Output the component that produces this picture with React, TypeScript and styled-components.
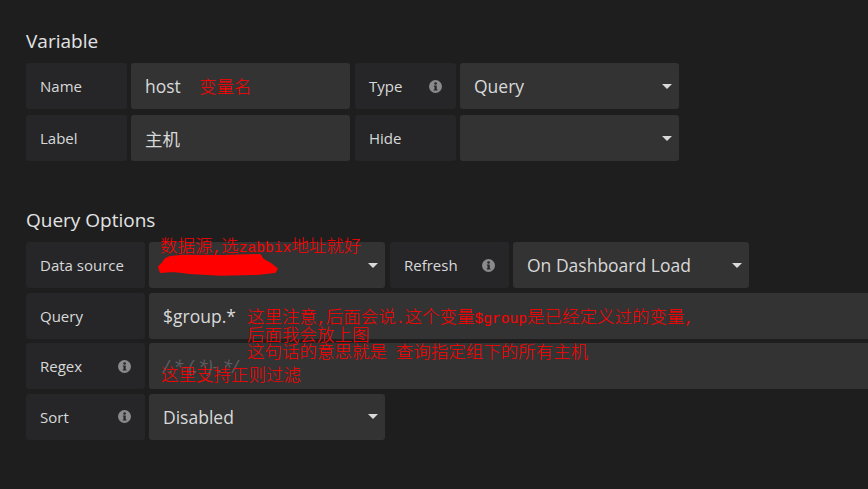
import React from "react";
import styled, { createGlobalStyle } from "styled-components";

const GlobalStyle = createGlobalStyle`
  html, body {
    margin: 0;
    padding: 0;
    background: #1f1e1f;
    overflow: hidden;
  }
  body {
    font-family: "Open Sans", "Noto Sans", sans-serif;
    color: #d8d9da;
  }
`;

const Page = styled.div`
  position: relative;
  width: 1100px;
  height: 489px;
  padding: 30px 0 0 26px;
  box-sizing: border-box;
`;

const Section = styled.section<{ $after: number }>`
  margin-bottom: ${(p) => p.$after}px;
`;

const Heading = styled.h3`
  margin: 0 0 11px 0;
  font-size: 19px;
  line-height: 22px;
  font-weight: 400;
  color: #e2e3e4;
`;

const Rows = styled.div<{ $gap: number }>`
  display: flex;
  flex-direction: column;
  gap: ${(p) => p.$gap}px;
`;

const Row = styled.div`
  display: flex;
  gap: 5px;
`;

const Group = styled.div`
  display: flex;
  gap: 4px;
`;

const Label = styled.div<{ $w: number }>`
  width: ${(p) => p.$w}px;
  height: 46px;
  box-sizing: border-box;
  padding: 0 14px;
  background: #262628;
  border-radius: 3px;
  display: flex;
  align-items: center;
  justify-content: space-between;
  font-size: 15px;
  color: #d8d9da;
`;

const Field = styled.div<{ $w: number }>`
  width: ${(p) => p.$w}px;
  height: 46px;
  box-sizing: border-box;
  padding: 0 7px 0 14px;
  background: #333333;
  border-radius: 3px;
  display: flex;
  align-items: center;
  font-size: 17.5px;
  color: #d8d9da;
  font-family: "Open Sans", "Noto Sans CJK SC", sans-serif;
  white-space: nowrap;
`;

const Placeholder = styled.span`
  color: #5e5e60;
  font-style: italic;
`;

const CaretBox = styled.span`
  margin-left: auto;
  display: flex;
  align-items: center;
`;

const Annot = styled.div<{ $top: number; $left: number }>`
  position: absolute;
  top: ${(p) => p.$top}px;
  left: ${(p) => p.$left}px;
  font-family: "Noto Sans CJK SC", sans-serif;
  font-weight: 300;
  font-size: 17.5px;
  color: #ff0000;
  white-space: nowrap;
`;

const AnnotLine = styled.div`
  height: 17.5px;
  line-height: 17.5px;
`;

const Mono = styled.span`
  font-family: "Liberation Mono", monospace;
  font-size: 14.6px;
  font-weight: 400;
  line-height: 0;
  white-space: pre;
`;

const Blob = styled.svg`
  position: absolute;
  top: 252px;
  left: 156px;
`;

const Caret = () => (
  <CaretBox>
    <svg width="10" height="5" viewBox="0 0 10 5">
      <polygon points="0,0 10,0 5,5" fill="#d8d9da" />
    </svg>
  </CaretBox>
);

const Info = () => (
  <svg width="13" height="13" viewBox="0 0 13 13">
    <circle cx="6.5" cy="6.5" r="6.5" fill="#8a8a8c" />
    <circle cx="6.6" cy="3.5" r="1.3" fill="#262628" />
    <path d="M4.9 5.4 H7.7 V9.6 H8.5 V10.6 H4.7 V9.6 H5.5 V6.4 H4.9 Z" fill="#262628" />
  </svg>
);

export default function App() {
  return (
    <>
      <GlobalStyle />
      <Page>
        <Section $after={48}>
          <Heading>Variable</Heading>
          <Rows $gap={6}>
            <Row>
              <Group>
                <Label $w={101}>Name</Label>
                <Field $w={219}>host</Field>
              </Group>
              <Group>
                <Label $w={101}>
                  Type <Info />
                </Label>
                <Field $w={219}>
                  Query
                  <Caret />
                </Field>
              </Group>
            </Row>
            <Row>
              <Group>
                <Label $w={101}>Label</Label>
                <Field $w={219}>主机</Field>
              </Group>
              <Group>
                <Label $w={101}>Hide</Label>
                <Field $w={219}>
                  <Caret />
                </Field>
              </Group>
            </Row>
          </Rows>
        </Section>

        <Section $after={45}>
          <Heading>Query Options</Heading>
          <Rows $gap={4.5}>
            <Row>
              <Group>
                <Label $w={119}>Data source</Label>
                <Field $w={236}>
                  <Caret />
                </Field>
              </Group>
              <Group>
                <Label $w={119}>
                  Refresh <Info />
                </Label>
                <Field $w={236}>
                  On Dashboard Load
                  <Caret />
                </Field>
              </Group>
            </Row>
            <Row>
              <Group>
                <Label $w={119}>Query</Label>
                <Field $w={780}>$group.*</Field>
              </Group>
            </Row>
            <Row>
              <Group>
                <Label $w={119}>
                  Regex <Info />
                </Label>
                <Field $w={780}>
                  <Placeholder>/.*-(.*)-.*/</Placeholder>
                </Field>
              </Group>
            </Row>
            <Row>
              <Group>
                <Label $w={119}>
                  Sort <Info />
                </Label>
                <Field $w={236}>
                  Disabled
                  <Caret />
                </Field>
              </Group>
            </Row>
          </Rows>
        </Section>

        <Section $after={0}>
          <Heading>Selection Options</Heading>
        </Section>

        <Annot $top={77} $left={199}>
          <AnnotLine>变量名</AnnotLine>
        </Annot>
        <Annot $top={236} $left={160}>
          <AnnotLine>
            数据源<Mono>,</Mono>选<Mono>zabbix</Mono>地址就好
          </AnnotLine>
        </Annot>
        <Blob width="124" height="26" viewBox="0 0 124 26">
          <path
            d="M9 7.7 L14 5 L27 3.7 L67 4 L104 3 L107 7.7 L115.7 12.7 L120.7 16.7 L119 20 L100.7 22 L64 22.7 L34 21 L17 19 L4.7 20 L3 15 L7 11 Z"
            fill="#ff0000"
            stroke="#ff0000"
            strokeWidth="2"
            strokeLinejoin="round"
          />
        </Blob>
        <Annot $top={307} $left={247}>
          <AnnotLine>
            这里注意<Mono>,</Mono>后面会说<Mono>.</Mono>这个变量<Mono>$group</Mono>是已经定义过的变量<Mono>,</Mono>
          </AnnotLine>
          <AnnotLine>后面我会放上图</AnnotLine>
          <AnnotLine>
            这句话的意思就是<Mono> </Mono>查询指定组下的所有主机
          </AnnotLine>
        </Annot>
        <Annot $top={365} $left={161}>
          <AnnotLine>这里支持正则过滤</AnnotLine>
        </Annot>
      </Page>
    </>
  );
}
